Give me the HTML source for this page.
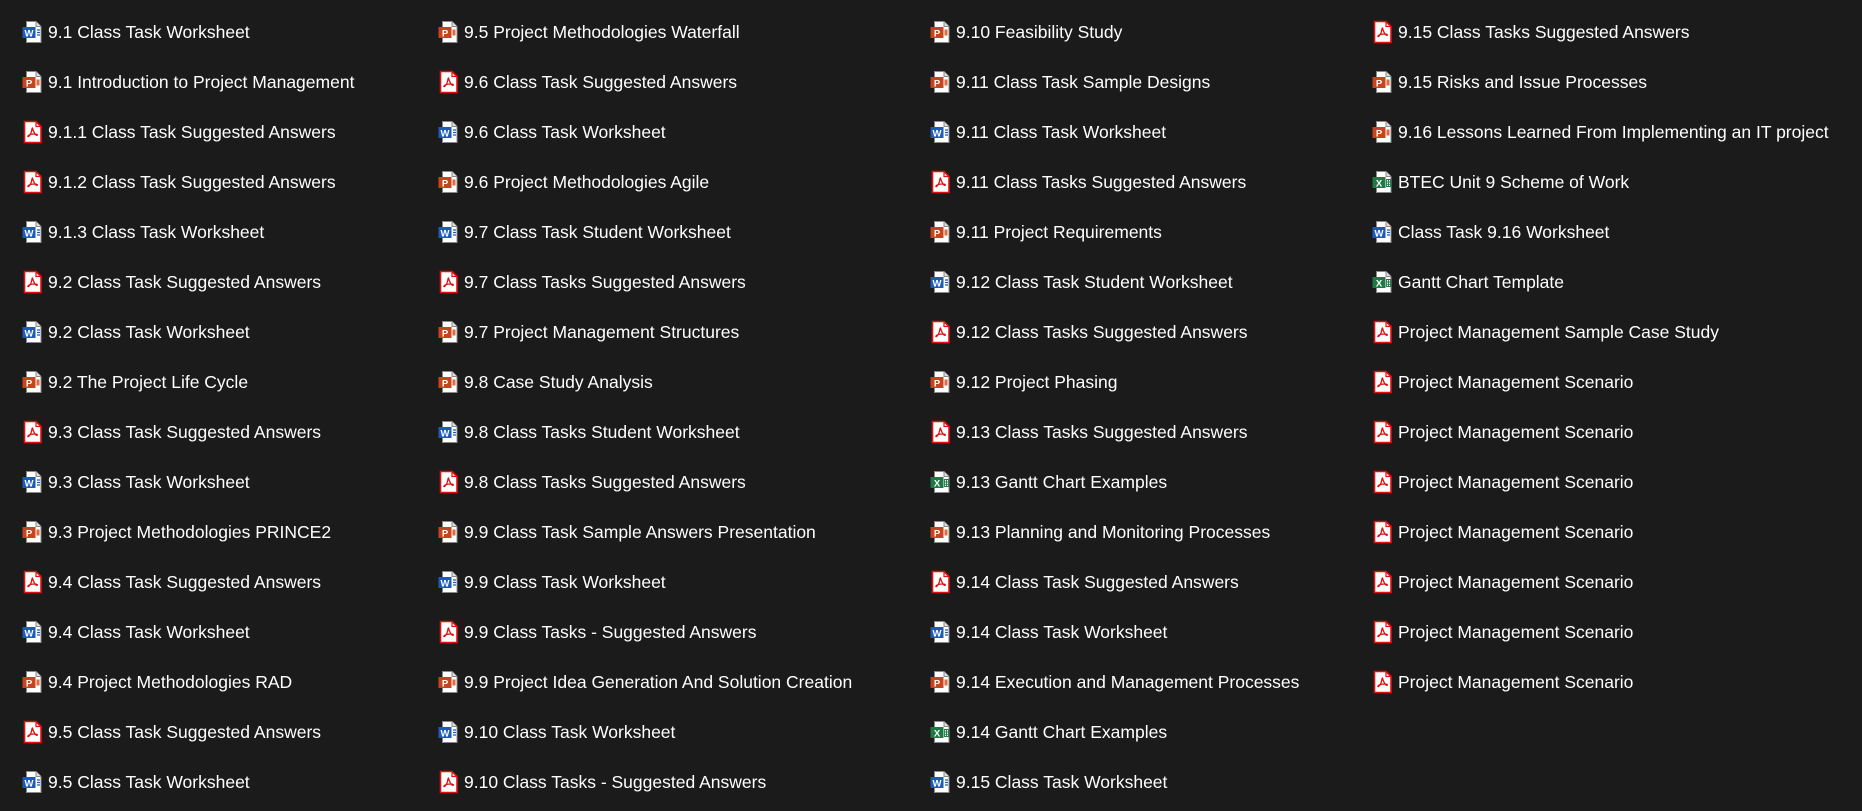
<!DOCTYPE html>
<html><head><meta charset="utf-8"><style>
html,body{margin:0;padding:0;background:#1b1b1b;width:1862px;height:811px;overflow:hidden}
.i{position:absolute;height:50px;line-height:50px;color:#fff;font-family:"Liberation Sans",sans-serif;font-size:17.5px;white-space:nowrap}
.i svg{position:absolute;left:0;top:13px}
.i span{position:absolute;left:26px;top:0}
</style></head><body>
<svg width="0" height="0" style="position:absolute">
<defs>
<symbol id="pg" viewBox="0 0 22 24"><path d="M4.5 1.5h9.5l5 5v16h-14.5z" fill="#fff" stroke="#888" stroke-width="1"/><path d="M14 1.5v5h5" fill="#ddd" stroke="#888" stroke-width="1"/></symbol>
<symbol id="w" viewBox="0 0 22 24"><use href="#pg"/><rect x="0.5" y="7" width="13" height="11" fill="#1e5bb8"/><text x="7" y="16.3" font-family="Liberation Sans" font-weight="bold" font-size="9.5" fill="#fff" text-anchor="middle">W</text><path d="M15 10h3M15 12.5h3M15 15h3" stroke="#1e5bb8" stroke-width="1.2"/></symbol>
<symbol id="p" viewBox="0 0 22 24"><use href="#pg"/><rect x="0.5" y="7" width="13" height="11" fill="#c8441e"/><text x="7" y="16.3" font-family="Liberation Sans" font-weight="bold" font-size="9.5" fill="#fff" text-anchor="middle">P</text><path d="M14.5 9.5h3v6h-3" fill="#e06a3e"/></symbol>
<symbol id="x" viewBox="0 0 22 24"><use href="#pg"/><rect x="0.5" y="7" width="13" height="11" fill="#1d7a44"/><text x="7" y="16.3" font-family="Liberation Sans" font-weight="bold" font-size="9.5" fill="#fff" text-anchor="middle">X</text><path d="M14.5 9.5h4v7h-4zM14.5 12h4M14.5 14.3h4M16.5 9.5v7" fill="none" stroke="#1d7a44" stroke-width="0.9"/></symbol>
<symbol id="a" viewBox="0 0 22 24"><path d="M2.5 1.5h11.5l5 5v16h-16.5z" fill="#fff" stroke="#e01010" stroke-width="1.6"/><path d="M14 1.5v5h5" fill="none" stroke="#e01010" stroke-width="1.2"/><path d="M10.5 8c-1 0 0 3 -2.5 7c-1.5 2 -2.5 2 -2 1c1 -1.5 4 -2 7 -2c2 0 3 1 2 1.3c-2 0 -4 -5 -4.5 -7.3z" fill="none" stroke="#e01010" stroke-width="1.3"/></symbol>
</defs></svg>
<div id="c"></div>
<script>
const cols=[[22,[
["w","9.1 Class Task Worksheet"],["p","9.1 Introduction to Project Management"],["a","9.1.1 Class Task Suggested Answers"],["a","9.1.2 Class Task Suggested Answers"],["w","9.1.3 Class Task Worksheet"],["a","9.2 Class Task Suggested Answers"],["w","9.2 Class Task Worksheet"],["p","9.2 The Project Life Cycle"],["a","9.3 Class Task Suggested Answers"],["w","9.3 Class Task Worksheet"],["p","9.3 Project Methodologies PRINCE2"],["a","9.4 Class Task Suggested Answers"],["w","9.4 Class Task Worksheet"],["p","9.4 Project Methodologies RAD"],["a","9.5 Class Task Suggested Answers"],["w","9.5 Class Task Worksheet"]]],
[438,[["p","9.5 Project Methodologies Waterfall"],["a","9.6 Class Task Suggested Answers"],["w","9.6 Class Task Worksheet"],["p","9.6 Project Methodologies Agile"],["w","9.7 Class Task Student Worksheet"],["a","9.7 Class Tasks Suggested Answers"],["p","9.7 Project Management Structures"],["p","9.8 Case Study Analysis"],["w","9.8 Class Tasks Student Worksheet"],["a","9.8 Class Tasks Suggested Answers"],["p","9.9 Class Task Sample Answers Presentation"],["w","9.9 Class Task Worksheet"],["a","9.9 Class Tasks - Suggested Answers"],["p","9.9 Project Idea Generation And Solution Creation"],["w","9.10 Class Task Worksheet"],["a","9.10 Class Tasks - Suggested Answers"]]],
[930,[["p","9.10 Feasibility Study"],["p","9.11 Class Task Sample Designs"],["w","9.11 Class Task Worksheet"],["a","9.11 Class Tasks Suggested Answers"],["p","9.11 Project Requirements"],["w","9.12 Class Task Student Worksheet"],["a","9.12 Class Tasks Suggested Answers"],["p","9.12 Project Phasing"],["a","9.13 Class Tasks Suggested Answers"],["x","9.13 Gantt Chart Examples"],["p","9.13 Planning and Monitoring Processes"],["a","9.14 Class Task Suggested Answers"],["w","9.14 Class Task Worksheet"],["p","9.14 Execution and Management Processes"],["x","9.14 Gantt Chart Examples"],["w","9.15 Class Task Worksheet"]]],
[1372,[["a","9.15 Class Tasks Suggested Answers"],["p","9.15 Risks and Issue Processes"],["p","9.16 Lessons Learned From Implementing an IT project"],["x","BTEC Unit 9 Scheme of Work"],["w","Class Task 9.16 Worksheet"],["x","Gantt Chart Template"],["a","Project Management Sample Case Study"],["a","Project Management Scenario"],["a","Project Management Scenario"],["a","Project Management Scenario"],["a","Project Management Scenario"],["a","Project Management Scenario"],["a","Project Management Scenario"],["a","Project Management Scenario"]]]];
let h="";
for(const [x,items] of cols){items.forEach((it,i)=>{h+=`<div class="i" style="left:${x}px;top:${7+i*50}px"><svg width="22" height="24"><use href="#${it[0]}"/></svg><span>${it[1]}</span></div>`;});}
document.getElementById("c").innerHTML=h;
</script>
</body></html>
